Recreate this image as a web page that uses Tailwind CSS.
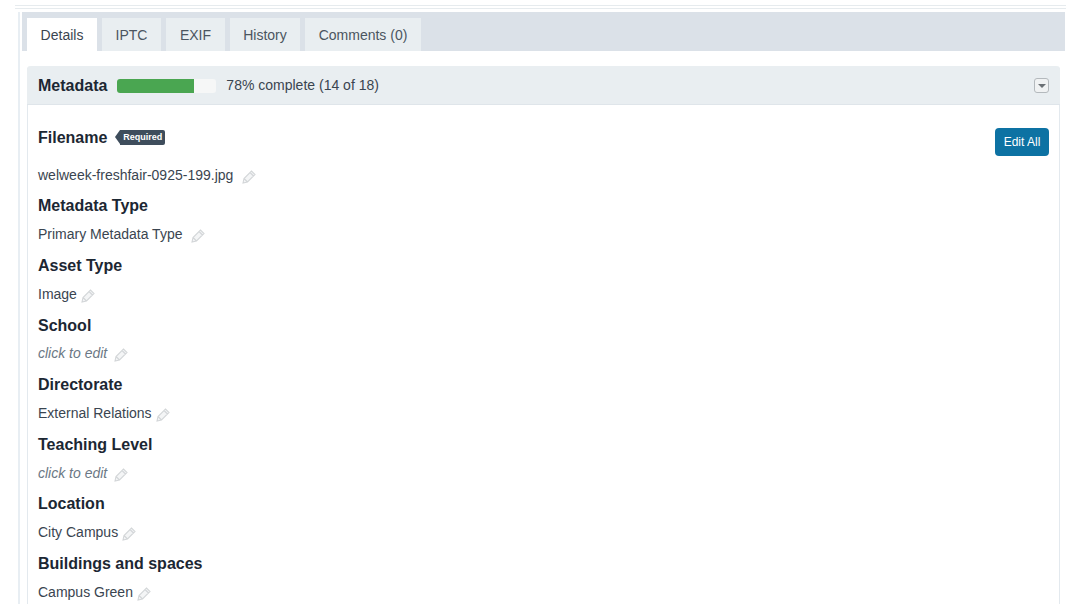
<!DOCTYPE html>
<html><head><script src="https://cdn.jsdelivr.net/npm/@tailwindcss/browser@4"></script></head>
<body class="bg-white">
<div class="w-[1080px] h-[608px] overflow-hidden bg-white font-['Liberation_Sans',Arial,sans-serif] relative">
  <div class="ml-[15px] mt-[5px] w-[1051px] h-[4px] border-y border-[#e6ebee]"></div>
  <div class="ml-[18px] mt-[3px] w-[1047px] h-[592px] overflow-hidden border-l-2 border-[#e8eef3] pl-[2px]">
    <div class="h-[39px] bg-[#dbe1e8] flex items-end pl-[5px] gap-[5px] text-[14px] text-[#4b5560]">
      <div class="w-[70px] h-[33px] pt-[1px] bg-white flex items-center justify-center text-[#3a4550]">Details</div>
      <div class="w-[59px] h-[33px] pt-[1px] bg-[#e9eef1] flex items-center justify-center">IPTC</div>
      <div class="w-[59px] h-[33px] pt-[1px] bg-[#e9eef1] flex items-center justify-center">EXIF</div>
      <div class="w-[70px] h-[33px] pt-[1px] bg-[#e9eef1] flex items-center justify-center">History</div>
      <div class="w-[116px] h-[33px] pt-[1px] bg-[#e9eef1] flex items-center justify-center">Comments (0)</div>
    </div>
    <div class="ml-[5px] mt-[15px] w-[1033px] h-[560px] border border-t-0 border-[#e3e9ee] rounded-t-[4px]">
      <div class="h-[39px] -mx-px pt-[1px] bg-[#e9eef1] rounded-t-[4px] border-b border-[#dfe5ea] flex items-center pl-[11px] pr-[11px]">
        <span class="text-[16px] font-bold text-[#1c2733]">Metadata</span>
        <div class="ml-[10px] w-[99px] h-[14px] bg-[#f6f7f7] rounded-[3px] overflow-hidden"><div class="w-[77px] h-full bg-[#4aa651]"></div></div>
        <span class="ml-[10px] text-[14px] text-[#3a4550]">78% complete (14 of 18)</span>
        <div class="ml-auto w-[15px] h-[15px] bg-[#f0f2f3] border border-[#b4b9bd] rounded-[3px] flex items-center justify-center">
          <div class="w-0 h-0 border-x-[4px] border-x-transparent border-t-[4px] border-t-[#6b7075]"></div>
        </div>
      </div>
      <div class="relative pl-[10px] text-[14px] text-[#3a4550]">
        <button class="absolute right-[10px] top-[23px] w-[54px] h-[28px] rounded-[4px] bg-[#0d72a3] text-white text-[12px]">Edit All</button>
        <div class="h-[58px] pt-[23px] flex items-start">
          <span class="text-[16px] leading-[20px] font-bold text-[#1c2733]">Filename</span>
          <span class="relative ml-[13px] mt-[2px] h-[15px] px-[3px] bg-[#3e4d5c] rounded-r-[2px] text-white text-[9px] leading-[15px] font-bold">
            <span class="absolute -left-[5px] top-0 w-0 h-0 border-y-[7.5px] border-y-transparent border-r-[5px] border-r-[#3e4d5c]"></span>Required</span>
        </div>
        <div class="h-[24px] flex items-center">welweek-freshfair-0925-199.jpg<svg class="ml-[9px] mt-[2px] w-[15px] h-[15px]" viewBox="0 0 15 15" fill="#f4f5f6" stroke="#d3d6d8" stroke-width="1.1"><path d="M1 14l1-4.500 7.500-7.500 3.500 3.500-7.500 7.500zM8 3.500l3.500 3.500M2 9.500l3.500 3.500"/></svg></div>
        <div class="h-[24px] mt-[6.5px] flex items-center"><span class="text-[16px] font-bold text-[#1c2733]">Metadata Type</span></div>
        <div class="h-[24px] mt-[4.5px] flex items-center">Primary Metadata Type<svg class="ml-[9px] mt-[2px] w-[15px] h-[15px]" viewBox="0 0 15 15" fill="#f4f5f6" stroke="#d3d6d8" stroke-width="1.1"><path d="M1 14l1-4.500 7.500-7.500 3.500 3.500-7.500 7.500zM8 3.500l3.500 3.500M2 9.500l3.500 3.500"/></svg></div>
        <div class="h-[24px] mt-[8px] flex items-center"><span class="text-[16px] font-bold text-[#1c2733]">Asset Type</span></div>
        <div class="h-[24px] mt-[4.5px] flex items-center">Image<svg class="ml-[4px] mt-[2px] w-[15px] h-[15px]" viewBox="0 0 15 15" fill="#f4f5f6" stroke="#d3d6d8" stroke-width="1.1"><path d="M1 14l1-4.500 7.500-7.500 3.500 3.500-7.500 7.500zM8 3.500l3.500 3.500M2 9.500l3.500 3.500"/></svg></div>
        <div class="h-[24px] mt-[7px] flex items-center"><span class="text-[16px] font-bold text-[#1c2733]">School</span></div>
        <div class="h-[24px] mt-[3.5px] flex items-center"><i class="text-[#6b7885]">click to edit</i><svg class="ml-[7px] mt-[2px] w-[15px] h-[15px]" viewBox="0 0 15 15" fill="#f4f5f6" stroke="#d3d6d8" stroke-width="1.1"><path d="M1 14l1-4.500 7.500-7.500 3.500 3.500-7.500 7.500zM8 3.500l3.500 3.500M2 9.500l3.500 3.500"/></svg></div>
        <div class="h-[24px] mt-[8px] flex items-center"><span class="text-[16px] font-bold text-[#1c2733]">Directorate</span></div>
        <div class="h-[24px] mt-[4.5px] flex items-center">External Relations<svg class="ml-[4px] mt-[2px] w-[15px] h-[15px]" viewBox="0 0 15 15" fill="#f4f5f6" stroke="#d3d6d8" stroke-width="1.1"><path d="M1 14l1-4.500 7.500-7.500 3.500 3.500-7.500 7.500zM8 3.500l3.500 3.500M2 9.500l3.500 3.500"/></svg></div>
        <div class="h-[24px] mt-[7px] flex items-center"><span class="text-[16px] font-bold text-[#1c2733]">Teaching Level</span></div>
        <div class="h-[24px] mt-[4.5px] flex items-center"><i class="text-[#6b7885]">click to edit</i><svg class="ml-[7px] mt-[2px] w-[15px] h-[15px]" viewBox="0 0 15 15" fill="#f4f5f6" stroke="#d3d6d8" stroke-width="1.1"><path d="M1 14l1-4.500 7.500-7.500 3.500 3.500-7.500 7.500zM8 3.500l3.500 3.500M2 9.500l3.500 3.500"/></svg></div>
        <div class="h-[24px] mt-[7px] flex items-center"><span class="text-[16px] font-bold text-[#1c2733]">Location</span></div>
        <div class="h-[24px] mt-[4.5px] flex items-center">City Campus<svg class="ml-[4px] mt-[2px] w-[15px] h-[15px]" viewBox="0 0 15 15" fill="#f4f5f6" stroke="#d3d6d8" stroke-width="1.1"><path d="M1 14l1-4.500 7.500-7.500 3.500 3.500-7.500 7.500zM8 3.500l3.500 3.500M2 9.500l3.500 3.500"/></svg></div>
        <div class="h-[24px] mt-[7px] flex items-center"><span class="text-[16px] font-bold text-[#1c2733]">Buildings and spaces</span></div>
        <div class="h-[24px] mt-[4.5px] flex items-center">Campus Green<svg class="ml-[4px] mt-[2px] w-[15px] h-[15px]" viewBox="0 0 15 15" fill="#f4f5f6" stroke="#d3d6d8" stroke-width="1.1"><path d="M1 14l1-4.500 7.500-7.500 3.500 3.500-7.500 7.500zM8 3.500l3.500 3.500M2 9.500l3.500 3.500"/></svg></div>
      </div>
    </div>
  </div>
</div>
</body></html>
